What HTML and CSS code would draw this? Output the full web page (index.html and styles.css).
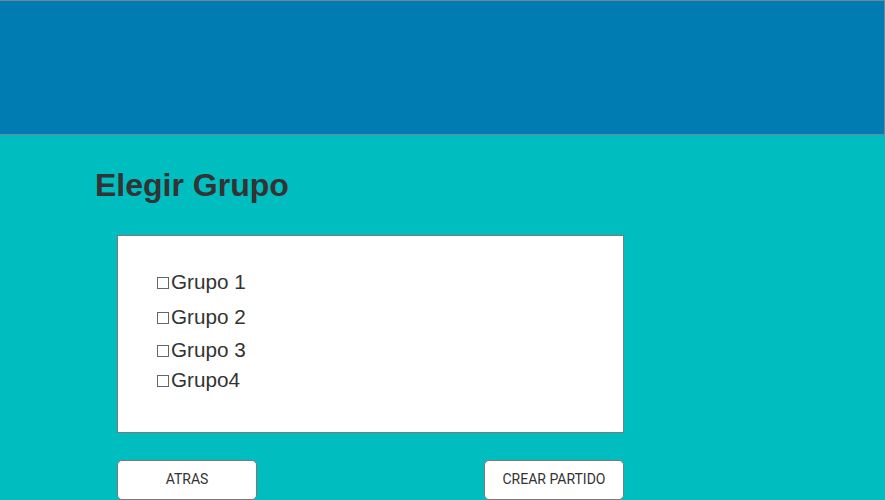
FILE: index.html
```html
<!DOCTYPE html>
<html lang="es">
<head>
<meta charset="utf-8">
<title>Elegir Grupo</title>
<link rel="stylesheet" href="styles.css">
</head>
<body>
<header class="topbar"></header>
<main class="content">
  <h1 class="title">Elegir Grupo</h1>
  <section class="panel">
    <div class="item item-1"><span class="check"></span>Grupo 1</div>
    <div class="item item-2"><span class="check"></span>Grupo 2</div>
    <div class="item item-3"><span class="check"></span>Grupo 3</div>
    <div class="item item-4"><span class="check"></span>Grupo4</div>
  </section>
  <div class="actions">
    <button class="btn">ATRAS</button>
    <button class="btn">CREAR PARTIDO</button>
  </div>
</main>
</body>
</html>
```
FILE: styles.css
```css
html, body {
  margin: 0;
  padding: 0;
  background: #00bec0;
  height: 500px;
  overflow: hidden;
}
.topbar {
  box-sizing: border-box;
  height: 135px;
  background: #007cb3;
  border-top: 1px solid #6f8797;
  border-right: 1px solid #6f8797;
  border-bottom: 1px solid #6f8797;
}
.content {
  padding-left: 95px;
}
.title {
  margin: 32px 0 0 0;
  font-family: "Liberation Sans", Arial, sans-serif;
  font-weight: bold;
  font-size: 32px;
  line-height: 37px;
  color: #333333;
}
.panel {
  box-sizing: border-box;
  margin: 31px 0 0 22px;
  width: 507px;
  height: 198px;
  background: #ffffff;
  border: 1px solid #7a7a7a;
  padding: 34px 0 0 39px;
}
.item {
  font-family: "Liberation Sans", Arial, sans-serif;
  font-size: 20.7px;
  line-height: 23px;
  color: #333333;
  display: flex;
  align-items: baseline;
}
.item-2 { margin-top: 12px; }
.item-3 { margin-top: 10px; }
.item-4 { margin-top: 7px; }
.check {
  display: inline-block;
  box-sizing: border-box;
  width: 12px;
  height: 12px;
  border: 1px solid #666666;
  margin-right: 2px;
}
.actions {
  display: flex;
  justify-content: space-between;
  width: 507px;
  margin: 27px 0 0 22px;
}
.btn {
  box-sizing: border-box;
  width: 140px;
  height: 40px;
  background: #ffffff;
  border: 1px solid #7a7a7a;
  border-radius: 5px;
  font-family: Roboto, "Liberation Sans", sans-serif;
  font-size: 14px;
  color: #333333;
  padding: 0 0 2px 0;
}
```
